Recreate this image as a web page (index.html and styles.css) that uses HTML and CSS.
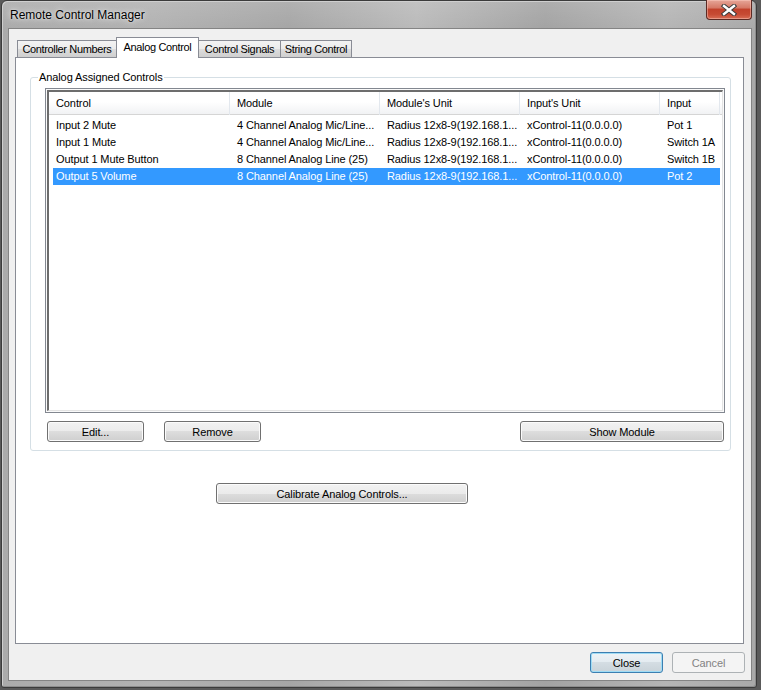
FILE: index.html
```html
<!DOCTYPE html>
<html lang="en">
<head>
    <meta charset="UTF-8">
    <title>Remote Control Manager</title>
    <link rel="stylesheet" href="styles.css">
</head>
<body>
    <div class="window">
        <div class="titlebar">
            <span class="title">Remote Control Manager</span>
            <button class="close-x" title="Close">
                <svg width="18" height="12" viewBox="0 0 18 12">
                    <path d="M4 2 L14 10 M14 2 L4 10" stroke="#3a3a3a" stroke-width="4.4" stroke-linecap="square"/>
                    <path d="M4 2 L14 10 M14 2 L4 10" stroke="#ffffff" stroke-width="2.4" stroke-linecap="square"/>
                </svg>
            </button>
        </div>

        <div class="client">
            <div class="tabs">
                <div class="tab tab-numbers">Controller Numbers</div>
                <div class="tab tab-analog active">Analog Control</div>
                <div class="tab tab-signals">Control Signals</div>
                <div class="tab tab-string">String Control</div>
            </div>

            <div class="tab-page">
                <fieldset class="group">
                    <legend>Analog Assigned Controls</legend>

                    <div class="list">
                        <div class="list-view">
                            <div class="list-head">
                                <div class="cell">Control</div>
                                <div class="cell">Module</div>
                                <div class="cell">Module's Unit</div>
                                <div class="cell">Input's Unit</div>
                                <div class="cell">Input</div>
                            </div>
                            <div class="list-rows">
                                <div class="list-row">
                                    <div class="cell">Input 2 Mute</div>
                                    <div class="cell">4 Channel Analog Mic/Line...</div>
                                    <div class="cell">Radius 12x8-9(192.168.1...</div>
                                    <div class="cell">xControl-11(0.0.0.0)</div>
                                    <div class="cell">Pot 1</div>
                                </div>
                                <div class="list-row">
                                    <div class="cell">Input 1 Mute</div>
                                    <div class="cell">4 Channel Analog Mic/Line...</div>
                                    <div class="cell">Radius 12x8-9(192.168.1...</div>
                                    <div class="cell">xControl-11(0.0.0.0)</div>
                                    <div class="cell">Switch 1A</div>
                                </div>
                                <div class="list-row">
                                    <div class="cell">Output 1 Mute Button</div>
                                    <div class="cell">8 Channel Analog Line (25)</div>
                                    <div class="cell">Radius 12x8-9(192.168.1...</div>
                                    <div class="cell">xControl-11(0.0.0.0)</div>
                                    <div class="cell">Switch 1B</div>
                                </div>
                                <div class="list-row selected">
                                    <div class="cell">Output 5 Volume</div>
                                    <div class="cell">8 Channel Analog Line (25)</div>
                                    <div class="cell">Radius 12x8-9(192.168.1...</div>
                                    <div class="cell">xControl-11(0.0.0.0)</div>
                                    <div class="cell">Pot 2</div>
                                </div>
                            </div>
                        </div>
                    </div>

                    <div class="group-buttons">
                        <button class="btn btn-edit">Edit...</button>
                        <button class="btn btn-remove">Remove</button>
                        <button class="btn btn-show">Show Module</button>
                    </div>
                </fieldset>

                <button class="btn btn-calibrate">Calibrate Analog Controls...</button>
            </div>

            <div class="dialog-buttons">
                <button class="btn btn-dialog btn-default">Close</button>
                <button class="btn btn-dialog" disabled>Cancel</button>
            </div>
        </div>
    </div>
</body>
</html>
```

FILE: styles.css
```css
/* Desktop behind the dialog */
body {
    margin: 0;
    padding-left: 1px;
    width: 761px;
    height: 690px;
    box-sizing: border-box;
    overflow: hidden;
    background: #5a5a5a;
    font-family: "Liberation Sans", Arial, sans-serif;
    font-size: 11px;
    letter-spacing: -0.1px;
    color: #000;
}

/* Window frame (Windows 7 basic theme) */
.window {
    width: 756px;
    height: 688px;
    box-sizing: border-box;
    border: 1px solid #3b3b3b;
    border-radius: 6px 6px 3px 3px;
    padding: 0 4px 6px 6px;
    display: flex;
    flex-direction: column;
    background:
        linear-gradient(to bottom, rgba(255, 255, 255, 0.12), rgba(255, 255, 255, 0) 28px),
        linear-gradient(to right, #ababab, #b2b2b2 20%, #a6a6a6 38%, #bababa 55%, #a3a3a3 72%, #b5b5b5 88%, #a9a9a9);
    box-shadow: inset 1px 1px 0 #cfcfcf, inset -1px -1px 0 #8e8e8e;
}

.titlebar {
    height: 27px;
    display: flex;
    justify-content: space-between;
    align-items: flex-start;
}

.title {
    margin-left: 2px;
    line-height: 28px;
    font-size: 12px;
    letter-spacing: 0;
    color: #000;
    text-shadow: 0 0 6px rgba(255, 255, 255, 0.9), 0 0 2px rgba(255, 255, 255, 0.6);
}

.close-x {
    width: 46px;
    height: 20px;
    margin-top: -1px;
    padding: 0;
    display: flex;
    align-items: center;
    justify-content: center;
    border: 1px solid #5b2a24;
    border-top: none;
    border-radius: 0 0 4px 4px;
    background: linear-gradient(to bottom, #e6a698, #d67a68 40%, #c2422c 50%, #c64a33 75%, #d86d55);
    box-shadow: inset 0 0 0 1px rgba(255, 210, 200, 0.45);
}

/* Client area */
.client {
    flex: 1;
    display: flex;
    flex-direction: column;
    border: 1px solid #848484;
    background: #f0f0f0;
}

/* Tabs */
.tabs {
    height: 28px;
    display: flex;
    align-items: flex-end;
    padding-left: 8px;
}

.tab {
    height: 17px;
    box-sizing: border-box;
    border: 1px solid #898c95;
    border-bottom: none;
    border-left: none;
    background: linear-gradient(to bottom, #f3f3f3, #ebebeb 50%, #dddddd 50%, #cfcfcf);
    text-align: center;
    line-height: 17px;
    letter-spacing: -0.35px;
    white-space: nowrap;
}

.tab-numbers { width: 100px; border-left: 1px solid #898c95; }
.tab-analog { width: 83px; }
.tab-signals { width: 82px; }
.tab-string { width: 71px; }

.tab.active {
    height: 21px;
    margin-bottom: -1px;
    position: relative;
    z-index: 1;
    background: #fff;
    border-left: 1px solid #898c95;
    margin-left: -1px;
    line-height: 19px;
}

.tab-page {
    height: 587px;
    box-sizing: border-box;
    margin: 0 7px 0 6px;
    border: 1px solid #898c95;
    background: #fff;
}

/* Group box */
.group {
    margin: 12px 12px 0 14px;
    padding: 0 0 8px 0;
    min-width: 0;
    border: 1px solid #d5dfe5;
    border-radius: 3px;
}

.group legend {
    margin-left: 7px;
    padding: 0 1px;
    line-height: 14px;
}

/* List view */
.list {
    width: 680px;
    height: 325px;
    box-sizing: border-box;
    margin: 4px 0 0 14px;
    padding: 1px;
    border: 1px solid #828790;
    background: #fafafa;
}

.list-view {
    height: 100%;
    box-sizing: border-box;
    border-style: solid;
    border-width: 2px 1px 1px 2px;
    border-color: #6d6d6d #e3e3e3 #e3e3e3 #6d6d6d;
    background: #fff;
}

.list-head {
    display: grid;
    grid-template-columns: 181px 150px 140px 140px 60px;
    height: 23px;
    box-sizing: border-box;
    border-bottom: 1px solid #d5d5d5;
    background: linear-gradient(to bottom, #ffffff, #ffffff 45%, #f1f2f4);
}

.list-head .cell {
    padding-left: 7px;
    line-height: 23px;
    border-right: 1px solid #e3e8ee;
}

.list-rows {
    padding-top: 2px;
}

.list-row {
    display: grid;
    grid-template-columns: 177px 150px 140px 140px 60px;
    width: 667px;
    margin-left: 4px;
    height: 17px;
    line-height: 17px;
}

.list-row .cell {
    padding-left: 7px;
    white-space: nowrap;
    overflow: hidden;
}

.list-row .cell:first-child {
    padding-left: 3px;
}

.list-row.selected {
    background: #3399ff;
    color: #fff;
}

/* Buttons */
.btn {
    height: 21px;
    box-sizing: border-box;
    padding: 0;
    font-family: inherit;
    font-size: 11px;
    letter-spacing: -0.1px;
    color: #000;
    border: 1px solid #707070;
    border-radius: 3px;
    background: linear-gradient(to bottom, #f2f2f2, #ebebeb 50%, #dddddd 50%, #cfcfcf);
    box-shadow: inset 0 0 0 1px #fbfbfb;
}

.group-buttons {
    display: flex;
    margin-top: 8px;
    padding: 0 6px 0 16px;
}

.btn-edit { width: 97px; }
.btn-remove { width: 97px; margin-left: 20px; }
.btn-show { width: 204px; margin-left: auto; }

.btn-calibrate {
    display: block;
    width: 252px;
    margin: 32px 0 0 200px;
}

.dialog-buttons {
    display: flex;
    justify-content: flex-end;
    gap: 9px;
    margin-top: 8px;
    padding-right: 6px;
}

.btn-dialog { width: 73px; }

.btn-default {
    border-color: #3c7fb1;
    box-shadow: inset 0 0 0 1px #9fdcf5;
    background: linear-gradient(to bottom, #eef3f6, #e3ebf0 50%, #d4dde3 50%, #c9d3d9);
}

.btn:disabled {
    color: #838383;
    border-color: #adb2b5;
    background: #f4f4f4;
    box-shadow: none;
}
```
